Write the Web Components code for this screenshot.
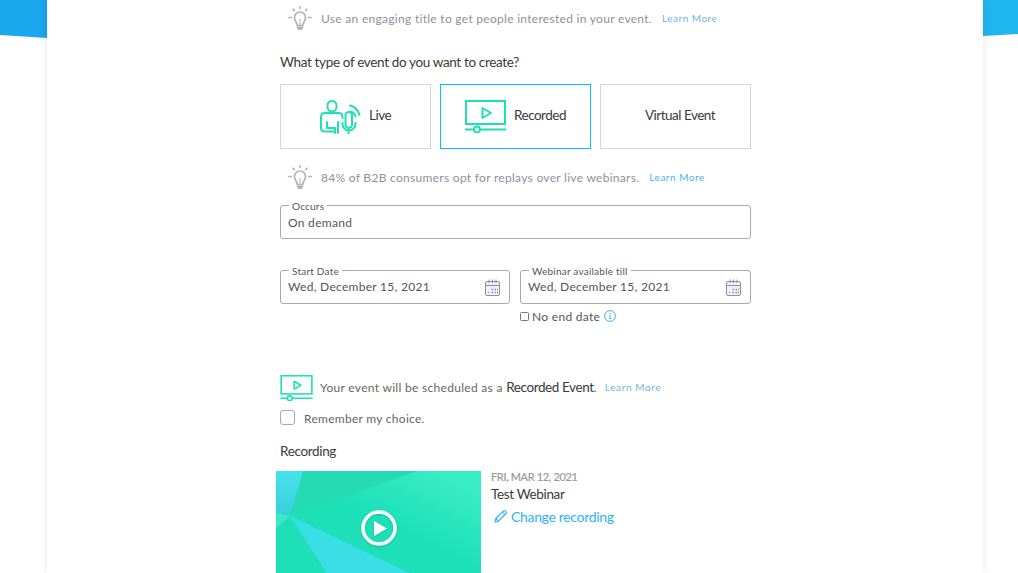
<!DOCTYPE html>
<html lang="en">
<head>
<meta charset="utf-8">
<title>Create event</title>
<style>
  html, body { margin: 0; height: 573px; overflow: hidden; background: #fff; }
  body { font-family: Lato, "Liberation Sans", sans-serif; color: #333; position: relative; }
</style>
</head>
<body>
<page-banner></page-banner>
<event-card>
  <tip-row link="#6db3e8" style="margin-top:6px">Use an engaging title to get people interested in your event.</tip-row>
  <section-title style="margin-top:24px">What type of event do you want to create?</section-title>
  <type-picker style="margin-top:13px">
    <type-card icon="live">Live</type-card>
    <type-card icon="recorded" selected>Recorded</type-card>
    <type-card>Virtual Event</type-card>
  </type-picker>
  <tip-row link="#3fb6f2" style="margin-top:16px">84% of B2B consumers opt for replays over live webinars.</tip-row>
  <outlined-field label="Occurs" style="margin-top:16px">On demand</outlined-field>
  <date-pair style="margin-top:31px">
    <outlined-field label="Start Date" calendar>Wed, December 15, 2021</outlined-field>
    <outlined-field label="Webinar available till" calendar>Wed, December 15, 2021</outlined-field>
  </date-pair>
  <no-end-date style="margin-top:5px">No end date</no-end-date>
  <schedule-note style="margin-top:52px">Your event will be scheduled as a <b slot="kind">Recorded Event</b></schedule-note>
  <remember-choice style="margin-top:10px">Remember my choice.</remember-choice>
  <section-title style="margin-top:18px">Recording</section-title>
  <recording-item style="margin-top:11px" date="FRI, MAR 12, 2021" name="Test Webinar">Change recording</recording-item>
</event-card>

<script>
const ICONS = {
    bulb: `<svg width="24" height="24" viewBox="0 0 24 24" fill="none" stroke="#b4b4b4" stroke-width="1.7" stroke-linecap="round">
        <path d="M9.300 19.500c0-3-2.800-4.200-2.800-8a5.500 5.500 0 0 1 11 0c0 3.800-2.800 5-2.800 8z"/>
        <path d="M9.500 21.500h5M10.800 23.300h2.400" stroke-width="2"/>
        <path d="M12 .8v1.500M5 3.300l1.200 1.200M19 3.300l-1.200 1.200M.8 11.500h2.400M20.800 11.500h2.400"/>
        <path d="M12 18.500v-5" stroke-width="1"/>
    </svg>`,
    live: `<svg width="41" height="34" viewBox="0 0 41 34" fill="none" stroke="#1fe0b4" stroke-width="2" stroke-linecap="round" stroke-linejoin="round">
        <rect x="7.500" y="1" width="9" height="10.500" rx="4.500"/>
        <path d="M22.500 18v-1c0-2.500-1.500-4-4-4H5c-2.500 0-4 1.500-4 4v11c0 2 1 3.500 3.500 3.500H15"/>
        <path d="M7 22v6h8v5M18 22v11"/>
        <rect x="25.500" y="12" width="6.500" height="16" rx="3.200"/>
        <path d="M22.500 23v1a6.500 6.500 0 0 0 13 0v-1M28.500 30v3.500"/>
        <path d="M30 5.500c4.500 1 8 4.500 9.500 9.500M30.500 11.500c2.500.5 4 2 5 5"/>
    </svg>`,
    recorded: `<svg viewBox="0 0 41 33" fill="none" stroke="#1fe0b4" stroke-width="2">
        <rect x="1" y="1" width="39" height="23"/>
        <path d="M17.500 8v10l8.500-5z" stroke-linejoin="round"/>
        <path d="M0 29.500h8.500M15.500 29.500H41"/>
        <circle cx="12" cy="29.500" r="3"/>
    </svg>`,
    calendar: `<svg width="15" height="17" viewBox="0 0 15 17" fill="none" stroke="#8e8ea8" stroke-width="1">
        <rect x=".5" y="2.500" width="14" height="14" rx="1.500" fill="#f1f1f6"/>
        <path d="M.5 6.500h14M4 .5v3.500M7.500 .5v3.500M11 .5v3.500"/>
        <path d="M3 13.500h1M6.500 13.500h1.500M9.500 13.500h1.500M12 13.500h1M6.500 10.500h1.500M9.500 10.500h1.500M12 10.500h1" stroke-width="1.300"/>
    </svg>`,
    info: `<svg width="12" height="12" viewBox="0 0 12 12" fill="none" stroke="#3fb0f0">
        <circle cx="6" cy="6" r="5.400"/>
        <path d="M6 5v3.500M5 8.500h2M5.200 5H6" stroke-width=".9"/>
        <circle cx="6" cy="3.300" r=".6" fill="#3fb0f0" stroke="none"/>
    </svg>`,
    pencil: `<svg width="13" height="13" viewBox="0 0 13 13" fill="none" stroke="#2db4f5" stroke-width="1.100" stroke-linejoin="round">
        <path d="M1 12l.8-3.500L9.500.9a1.200 1.200 0 0 1 1.700 0l.9.9a1.200 1.200 0 0 1 0 1.700L4.500 11.200z"/>
        <path d="M8.300 2.200l2.500 2.500M1.800 8.500l2.700 2.700"/>
    </svg>`
}

const base = `
    :host, * { box-sizing: border-box; }
`

function shadow(el, html) {
    el.attachShadow({ mode: 'open' }).innerHTML = html
}

class PageBanner extends HTMLElement {
    constructor() {
        super()
        shadow(this, `
            <style>
                :host { display: block; position: absolute; left: 0; top: 0; width: 1018px; height: 39px; }
                div {
                    height: 100%;
                    background: linear-gradient(90deg, #1aa7ee 0, #1aa9ee 50%, #1eb6f0 100%);
                    clip-path: polygon(0 35px, 47px 38px, 983px 36px, 1018px 34px, 1018px 0, 0 0);
                }
            </style>
            <div></div>
        `)
    }
}

class EventCard extends HTMLElement {
    constructor() {
        super()
        shadow(this, `
            <style>
                ${base}
                :host {
                    display: block;
                    position: relative;
                    width: 936px;
                    height: 573px;
                    margin-left: 47px;
                    background: #fff;
                    box-shadow: 0 0 8px rgba(0, 0, 0, .1);
                }
                .col { display: flex; flex-direction: column; width: 471px; margin-left: 233px; }
            </style>
            <div class="col"><slot></slot></div>
        `)
    }
}

class TipRow extends HTMLElement {
    constructor() {
        super()
        const link = this.getAttribute('link') || '#3fb6f2'
        shadow(this, `
            <style>
                ${base}
                :host {
                    display: flex; align-items: center;
                    height: 24px; padding-left: 8px;
                    font-size: 12px; letter-spacing: .29px; color: #8f8f9e;
                }
                .text { margin-left: 9px; white-space: nowrap; }
                a { margin-left: 10px; font-size: 10px; letter-spacing: .5px; color: ${link}; white-space: nowrap; }
                svg { flex: none; }
            </style>
            ${ICONS.bulb}<span class="text"><slot></slot></span><a>Learn More</a>
        `)
    }
}

class SectionTitle extends HTMLElement {
    constructor() {
        super()
        shadow(this, `
            <style>
                :host { display: block; font-size: 13.5px; line-height: 17px; letter-spacing: -.35px; color: #3a3a3a; }
            </style>
            <slot></slot>
        `)
    }
}

class TypePicker extends HTMLElement {
    constructor() {
        super()
        shadow(this, `
            <style>
                :host { display: grid; grid-template-columns: repeat(3, 151px); gap: 9px; }
            </style>
            <slot></slot>
        `)
    }
}

class TypeCard extends HTMLElement {
    constructor() {
        super()
        const icon = this.getAttribute('icon')
        const kind = icon ? ICONS[icon] : ''
        shadow(this, `
            <style>
                ${base}
                :host {
                    display: flex; align-items: center; justify-content: center; gap: 8px;
                    height: 65px;
                    padding-left: ${icon ? 0 : 9}px;
                    border: 1px solid #d6d6d6;
                    font-size: 13.5px; letter-spacing: -.5px; color: #3a3a3a;
                }
                :host([selected]) { border-color: #00c6fb; }
                svg { flex: none; display: block; }
                .recorded svg { width: 41px; height: 33px; }
                .label { margin-top: -3px; }
            </style>
            ${icon ? `<span class="${icon}">${kind}</span>` : ''}<span class="label"><slot></slot></span>
        `)
    }
}

class OutlinedField extends HTMLElement {
    constructor() {
        super()
        const label = this.getAttribute('label')
        const cal = this.hasAttribute('calendar')
        shadow(this, `
            <style>
                ${base}
                :host {
                    display: flex; align-items: center; justify-content: space-between;
                    position: relative;
                    height: 34px;
                    padding: 1px 9px 0 7px;
                    border: 1px solid #aaa; border-radius: 3px;
                    font-size: 12px; letter-spacing: .29px; color: #555;
                }
                .label {
                    position: absolute; left: 8px; top: -5px;
                    padding: 0 3px;
                    background: #fff;
                    font-size: 10px; line-height: 11px; letter-spacing: .22px; color: #555;
                    white-space: nowrap;
                }
                .value { margin-top: ${cal ? -2 : 0}px; }
                svg { flex: none; }
            </style>
            <span class="label">${label}</span><span class="value"><slot></slot></span>${cal ? ICONS.calendar : ''}
        `)
    }
}

class DatePair extends HTMLElement {
    constructor() {
        super()
        shadow(this, `
            <style>
                :host { display: grid; grid-template-columns: 230px 231px; gap: 10px; }
            </style>
            <slot></slot>
        `)
    }
}

class NoEndDate extends HTMLElement {
    constructor() {
        super()
        shadow(this, `
            <style>
                ${base}
                :host {
                    display: flex; align-items: center; gap: 3px;
                    height: 14px; margin-left: 240px;
                    font-size: 12px; letter-spacing: .3px; color: #555;
                }
                i { width: 9px; height: 9px; border: 1px solid #777; border-radius: 1.500px; }
                svg { margin-left: 1px; }
            </style>
            <i></i><span><slot></slot></span>${ICONS.info}
        `)
    }
}

class ScheduleNote extends HTMLElement {
    constructor() {
        super()
        shadow(this, `
            <style>
                ${base}
                :host {
                    display: flex; align-items: center;
                    height: 25px;
                    font-size: 12px; letter-spacing: .3px; color: #666; white-space: nowrap;
                }
                .pic svg { display: block; width: 33px; height: 26px; }
                .text { margin: -2px 0 0 7px; }
                ::slotted(b) { font-weight: 400; font-size: 13.5px; letter-spacing: -.4px; color: #3a3a3a; }
                a { margin: -1px 0 0 8px; font-size: 10px; letter-spacing: .6px; color: #6db3e8; }
            </style>
            <span class="pic">${ICONS.recorded}</span>
            <span class="text"><slot></slot> <slot name="kind"></slot>.</span>
            <a>Learn More</a>
        `)
    }
}

class RememberChoice extends HTMLElement {
    constructor() {
        super()
        shadow(this, `
            <style>
                ${base}
                :host {
                    display: flex; align-items: center; gap: 9px;
                    height: 15px;
                    font-size: 12px; letter-spacing: .28px; color: #666;
                }
                i { width: 15px; height: 15px; border: 1px solid #a9a6b8; border-radius: 3px; }
                span { margin-top: 2px; }
            </style>
            <i></i><span><slot></slot></span>
        `)
    }
}

class RecordingItem extends HTMLElement {
    constructor() {
        super()
        shadow(this, `
            <style>
                ${base}
                :host { display: flex; gap: 10px; margin-left: -4px; }
                .thumb { display: block; flex: none; }
                .info { display: flex; flex-direction: column; margin-top: -1px; }
                .date { font-size: 11px; line-height: 13px; letter-spacing: -.35px; color: #999; -webkit-text-stroke: .2px #999; }
                .name { margin-top: 3px; font-size: 13.5px; line-height: 17px; letter-spacing: -.35px; color: #3a3a3a; }
                .change {
                    display: flex; align-items: center; gap: 4px;
                    margin: 5px 0 0 3px;
                    font-size: 14px; line-height: 17px; letter-spacing: -.33px; color: #2db4f5;
                }
                .change span { margin-left: 0; }
            </style>
            <svg class="thumb" width="205" height="115" viewBox="0 0 205 115">
                <defs>
                    <linearGradient id="a" x1="0" y1="0" x2="0" y2="1"><stop offset="0" stop-color="#47e3ec"/><stop offset="1" stop-color="#36cfdc"/></linearGradient>
                    <linearGradient id="b" gradientUnits="userSpaceOnUse" x1="160" y1="0" x2="130" y2="60"><stop offset="0" stop-color="#38ecc6"/><stop offset="1" stop-color="#1de0b9"/></linearGradient>
                    <filter id="s" x="-20%" y="-20%" width="140%" height="140%"><feDropShadow dx="0" dy="1" stdDeviation="1" flood-opacity=".18"/></filter>
                </defs>
                <rect width="205" height="115" fill="#1de0b9"/>
                <polygon points="141,0 205,0 205,115 14,45" fill="url(#b)"/>
                <polygon points="27,0 141,0 14,45" fill="#25dbb6"/>
                <polygon points="0,0 27,0 14,45 0,42" fill="url(#a)"/>
                <polygon points="0,42 14,45 0,57" fill="#3be8c8"/>
                <polygon points="14,45 161,115 59,115" fill="#3adfe6"/>
                <g filter="url(#s)">
                    <circle cx="103" cy="57" r="16" fill="none" stroke="#fff" stroke-width="3.500"/>
                    <path d="M98 50v15l13-7.500z" fill="#fff"/>
                </g>
            </svg>
            <div class="info">
                <span class="date">${this.getAttribute('date')}</span>
                <span class="name">${this.getAttribute('name')}</span>
                <span class="change">${ICONS.pencil}<span><slot></slot></span></span>
            </div>
        `)
    }
}

customElements.define('page-banner', PageBanner)
customElements.define('event-card', EventCard)
customElements.define('tip-row', TipRow)
customElements.define('section-title', SectionTitle)
customElements.define('type-picker', TypePicker)
customElements.define('type-card', TypeCard)
customElements.define('outlined-field', OutlinedField)
customElements.define('date-pair', DatePair)
customElements.define('no-end-date', NoEndDate)
customElements.define('schedule-note', ScheduleNote)
customElements.define('remember-choice', RememberChoice)
customElements.define('recording-item', RecordingItem)
</script>
</body>
</html>
